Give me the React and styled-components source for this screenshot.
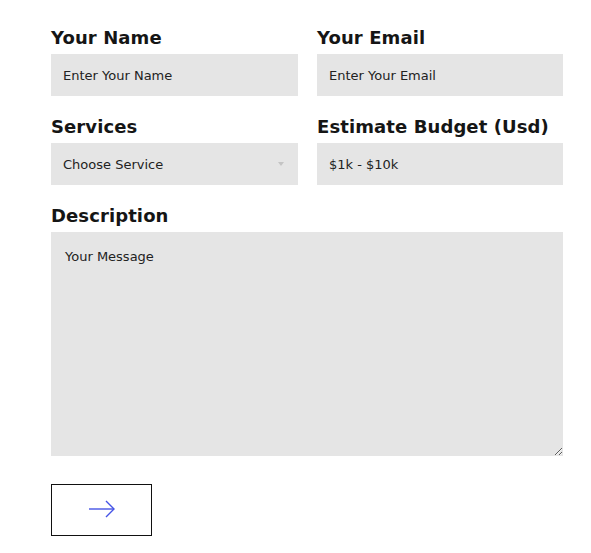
import React from 'react'
import styled, { createGlobalStyle } from 'styled-components'

const GlobalStyle = createGlobalStyle`
  * { box-sizing: border-box; }
  body {
    margin: 0;
    background: #fff;
    font-family: "DejaVu Sans", Verdana, sans-serif;
  }
`

const Form = styled.form`
  width: 512px;
  margin-left: 51px;
  padding-top: 24px;
`

const Grid = styled.div`
  display: grid;
  grid-template-columns: 247px 246px;
  column-gap: 19px;
  row-gap: 17px;
`

const Field = styled.div`
  display: flex;
  flex-direction: column;
  grid-column: ${p => (p.wide ? '1 / -1' : 'auto')};
`

const Label = styled.label`
  font-family: "DejaVu Sans", sans-serif;
  font-weight: 700;
  font-size: 18px;
  line-height: 24px;
  color: #151515;
  padding-top: 2px;
  margin-bottom: 4px;
  letter-spacing: 0.1px;
`

const Input = styled.input`
  height: 42px;
  border: none;
  outline: none;
  background: #e5e5e5;
  padding: 0 12px;
  font-family: "DejaVu Sans", sans-serif;
  font-size: 13px;
  color: #222;
  &::placeholder { color: #222; }
`

const SelectWrap = styled.div`
  position: relative;
`

const Select = styled.select`
  width: 100%;
  height: 42px;
  border: none;
  outline: none;
  appearance: none;
  background: #e5e5e5;
  padding: 0 12px;
  font-family: "DejaVu Sans", sans-serif;
  font-size: 13px;
  color: #222;
`

const Caret = styled.span`
  position: absolute;
  right: 14px;
  top: 19px;
  width: 0;
  height: 0;
  border-left: 3px solid transparent;
  border-right: 3px solid transparent;
  border-top: 4px solid #c4c4c4;
  pointer-events: none;
`

const TextArea = styled.textarea`
  height: 224px;
  border: none;
  outline: none;
  background: #e5e5e5;
  padding: 16px 14px;
  font-family: "DejaVu Sans", sans-serif;
  font-size: 13px;
  line-height: 18px;
  color: #222;
  &::placeholder { color: #222; }
`

const SubmitButton = styled.button`
  margin-top: 28px;
  width: 101px;
  height: 52px;
  border: 1px solid #111;
  background: #fff;
  display: flex;
  align-items: center;
  justify-content: center;
  cursor: pointer;
  padding: 0 0 3px;
`

function Arrow() {
  return (
    <svg width="28" height="18" viewBox="0 0 28 18" fill="none">
      <path d="M1 9H26" stroke="#4553e6" strokeWidth="1.4" />
      <path d="M18 1L26 9L18 17" stroke="#4553e6" strokeWidth="1.4" />
    </svg>
  )
}

export default function App() {
  return (
    <>
      <GlobalStyle />
      <Form onSubmit={e => e.preventDefault()}>
        <Grid>
          <Field>
            <Label>Your Name</Label>
            <Input placeholder="Enter Your Name" />
          </Field>
          <Field>
            <Label>Your Email</Label>
            <Input placeholder="Enter Your Email" />
          </Field>
          <Field>
            <Label>Services</Label>
            <SelectWrap>
              <Select defaultValue="">
                <option value="">Choose Service</option>
                <option>Web Design</option>
                <option>Development</option>
              </Select>
              <Caret />
            </SelectWrap>
          </Field>
          <Field>
            <Label>Estimate Budget (Usd)</Label>
            <Input defaultValue="$1k - $10k" />
          </Field>
          <Field wide>
            <Label>Description</Label>
            <TextArea placeholder="Your Message" />
          </Field>
        </Grid>
        <SubmitButton type="submit">
          <Arrow />
        </SubmitButton>
      </Form>
    </>
  )
}
